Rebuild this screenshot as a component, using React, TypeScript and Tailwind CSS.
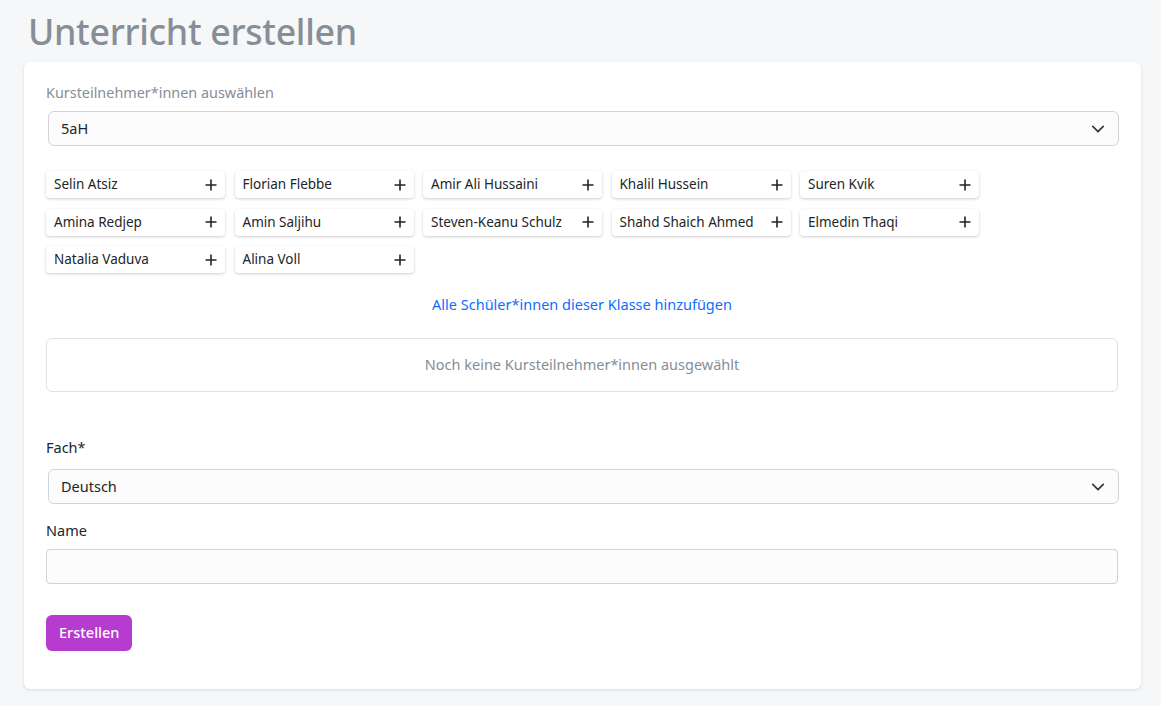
import React from "react";

const names = [
  "Selin Atsiz",
  "Florian Flebbe",
  "Amir Ali Hussaini",
  "Khalil Hussein",
  "Suren Kvik",
  "Amina Redjep",
  "Amin Saljihu",
  "Steven-Keanu Schulz",
  "Shahd Shaich Ahmed",
  "Elmedin Thaqi",
  "Natalia Vaduva",
  "Alina Voll",
];

function Chevron() {
  return (
    <svg width="14" height="14" viewBox="0 0 16 16" fill="none" stroke="#343a40" strokeWidth="2" strokeLinecap="round" strokeLinejoin="round">
      <path d="M2 5l6 6 6-6" />
    </svg>
  );
}

function Plus() {
  return (
    <svg width="12" height="12" viewBox="0 0 12 12" fill="none" stroke="#212529" strokeWidth="1.6">
      <path d="M6 0.5v11M0.5 6h11" />
    </svg>
  );
}

export default function App() {
  return (
    <div
      className="min-h-screen bg-[#f6f7f9] pb-4"
      style={{ fontFamily: '"Noto Sans", sans-serif' }}
    >
      <h1 className="pl-[28px] pt-[8px] h-[62px] text-[35.7px] leading-[46px] text-[#878e96] font-medium tracking-[-0.3px]">
        Unterricht erstellen
      </h1>
      <div className="ml-[24px] w-[1117px] bg-white rounded-[6px] shadow-[0_1px_3px_rgba(0,0,0,0.12)] pl-[22px] pr-[23px] pt-[21px] pb-[38px]">
        <div className="text-[14.4px] leading-[20px] text-[#868e96]">
          Kursteilnehmer*innen auswählen
        </div>
        <div className="mt-[8px] ml-[2px] mr-[-1px] h-[35px] border border-[#ced4da] rounded-[6px] bg-[#fcfcfc] flex items-center justify-between pl-[12px] pr-[13px] text-[14.5px] text-[#212529]">
          <span>5aH</span>
          <Chevron />
        </div>
        <div className="mt-[25px] flex flex-wrap gap-x-[9.5px] gap-y-[10.5px]">
          {names.map((n) => (
            <div
              key={n}
              className="w-[179px] h-[27px] bg-white rounded-[4px] shadow-[0_1px_3px_rgba(0,0,0,0.2)] flex items-center justify-between pl-[8px] pr-[8px] text-[13.5px] text-[#212529]"
            >
              <span>{n}</span>
              <Plus />
            </div>
          ))}
        </div>
        <div className="mt-[21px] text-center text-[14.5px] leading-[20px] text-[#0d6efd]">
          Alle Schüler*innen dieser Klasse hinzufügen
        </div>
        <div className="mt-[24px] h-[54px] border border-[#dee2e6] rounded-[6px] flex items-center justify-center text-[14.5px] text-[#868e96]">
          Noch keine Kursteilnehmer*innen ausgewählt
        </div>
        <div className="mt-[45px] text-[14.5px] leading-[20px] text-[#212529]">Fach*</div>
        <div className="mt-[12px] ml-[2px] mr-[-1px] h-[35px] border border-[#ced4da] rounded-[6px] bg-[#fcfcfc] flex items-center justify-between pl-[12px] pr-[13px] text-[14.5px] text-[#212529]">
          <span>Deutsch</span>
          <Chevron />
        </div>
        <div className="mt-[16px] text-[14.5px] leading-[20px] text-[#212529]">Name</div>
        <div className="mt-[9px] h-[35px] border border-[#ced4da] rounded-[4px] bg-[#fcfcfc]"></div>
        <button className="mt-[31px] h-[36px] px-[13px] rounded-[6px] bg-[#b63bce] text-white text-[14.5px] font-medium">
          Erstellen
        </button>
      </div>
    </div>
  );
}
